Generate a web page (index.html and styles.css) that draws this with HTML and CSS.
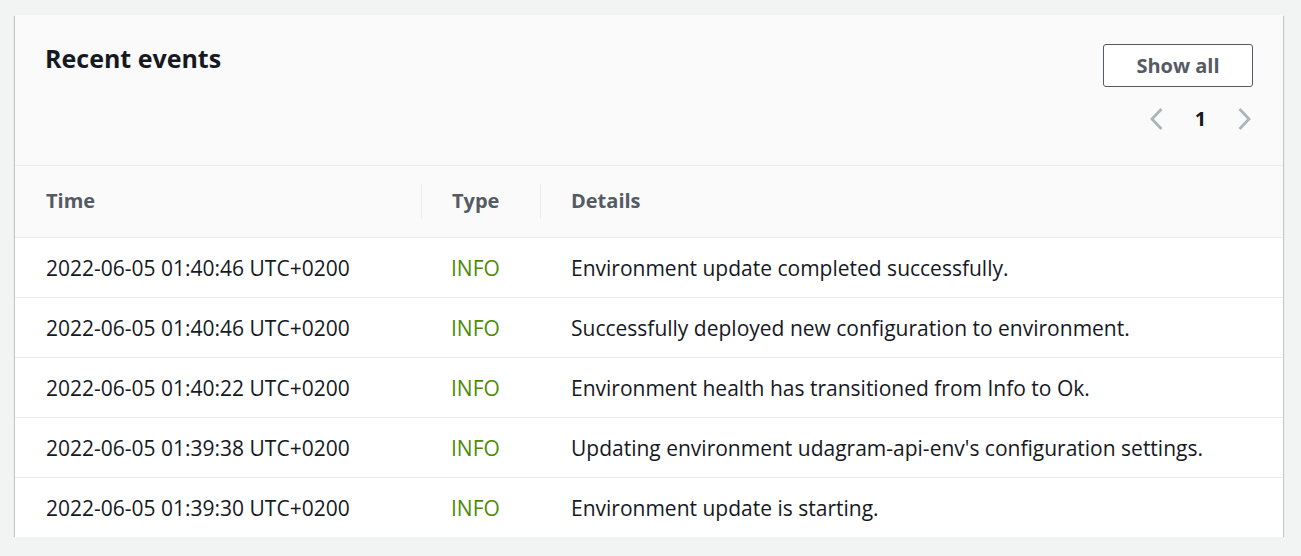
FILE: index.html
```html
<!DOCTYPE html>
<html>
<head>
<meta charset="utf-8">
<link rel="stylesheet" href="styles.css">
</head>
<body>
<div class="page">
  <section class="card">
    <header class="card-header">
      <h2 class="title">Recent events</h2>
      <div class="actions">
        <button class="btn">Show all</button>
        <nav class="pager">
          <span class="chev"><svg width="14" height="24" viewBox="0 0 14 24"><path d="M12.5 2 L3 12 L12.5 22" fill="none" stroke="#aab7b8" stroke-width="2.8"/></svg></span>
          <span class="page-num">1</span>
          <span class="chev"><svg width="14" height="24" viewBox="0 0 14 24"><path d="M1.5 2 L11 12 L1.5 22" fill="none" stroke="#aab7b8" stroke-width="2.8"/></svg></span>
        </nav>
      </div>
    </header>
    <table class="events">
      <colgroup>
        <col class="c-time"><col class="c-type"><col>
      </colgroup>
      <thead>
        <tr><th>Time</th><th class="sep">Type</th><th class="sep">Details</th></tr>
      </thead>
      <tbody>
        <tr><td>2022-06-05 01:40:46 UTC+0200</td><td class="info">INFO</td><td>Environment update completed successfully.</td></tr>
        <tr><td>2022-06-05 01:40:46 UTC+0200</td><td class="info">INFO</td><td>Successfully deployed new configuration to environment.</td></tr>
        <tr><td>2022-06-05 01:40:22 UTC+0200</td><td class="info">INFO</td><td>Environment health has transitioned from Info to Ok.</td></tr>
        <tr><td>2022-06-05 01:39:38 UTC+0200</td><td class="info">INFO</td><td>Updating environment udagram-api-env's configuration settings.</td></tr>
        <tr><td>2022-06-05 01:39:30 UTC+0200</td><td class="info">INFO</td><td>Environment update is starting.</td></tr>
      </tbody>
    </table>
  </section>
</div>
</body>
</html>
```
FILE: styles.css
```css
* { box-sizing: border-box; }
html, body { margin: 0; padding: 0; }
body {
  background: #f2f3f3;
  font-family: "Open Sans", "Noto Sans", sans-serif;
  color: #16191f;
}
.page { padding: 15px 18px 0 15px; }
.card {
  background: #ffffff;
  box-shadow: 0 1px 1px 0 rgba(0, 28, 36, 0.3), 1px 1px 1px 0 rgba(0, 28, 36, 0.15), -1px 1px 1px 0 rgba(0, 28, 36, 0.15);
}
.card-header {
  height: 151px;
  background: #fafafa;
  border-bottom: 1px solid #eaeded;
  display: flex;
  justify-content: space-between;
  align-items: flex-start;
  padding: 28px 30px 0 31px;
}
.title {
  margin: 1px 0 0 -1px;
  font-size: 25px;
  line-height: 28px;
  font-weight: 700;
  color: #16191f;
}
.actions {
  display: flex;
  flex-direction: column;
  align-items: flex-end;
  padding-top: 1px;
}
.btn {
  width: 150px;
  height: 43px;
  border: 1px solid #545b64;
  border-radius: 3px;
  background: #ffffff;
  color: #545b64;
  font-family: inherit;
  font-size: 20px;
  font-weight: 700;
  padding: 0;
  cursor: pointer;
}
.pager {
  display: flex;
  align-items: center;
  margin-top: 20px;
  margin-right: 1px;
}
.chev { display: flex; width: 14px; height: 24px; }
.page-num {
  font-size: 20px;
  font-weight: 700;
  width: 75px;
  text-align: center;
  line-height: 24px;
}
.events {
  width: 100%;
  border-collapse: collapse;
  table-layout: fixed;
}
.c-time { width: 406px; }
.c-type { width: 119px; }
.events th {
  height: 71px;
  background: #fafafa;
  text-align: left;
  font-size: 20px;
  font-weight: 700;
  color: #545b64;
  padding: 0 30px 1px 31px;
  border-bottom: 1px solid #eaeded;
  position: relative;
}
.events th.sep::before {
  content: "";
  position: absolute;
  left: 0;
  top: 18px;
  bottom: 18px;
  width: 1px;
  background: #eaeded;
}
.events td {
  height: 60px;
  padding: 2px 30px 0 31px;
  font-size: 21px;
  border-bottom: 1px solid #eaeded;
  white-space: nowrap;
}
.events tbody tr:last-child td { border-bottom: none; }
.events td.info { color: #4e8c06; padding-left: 30px; }
```
